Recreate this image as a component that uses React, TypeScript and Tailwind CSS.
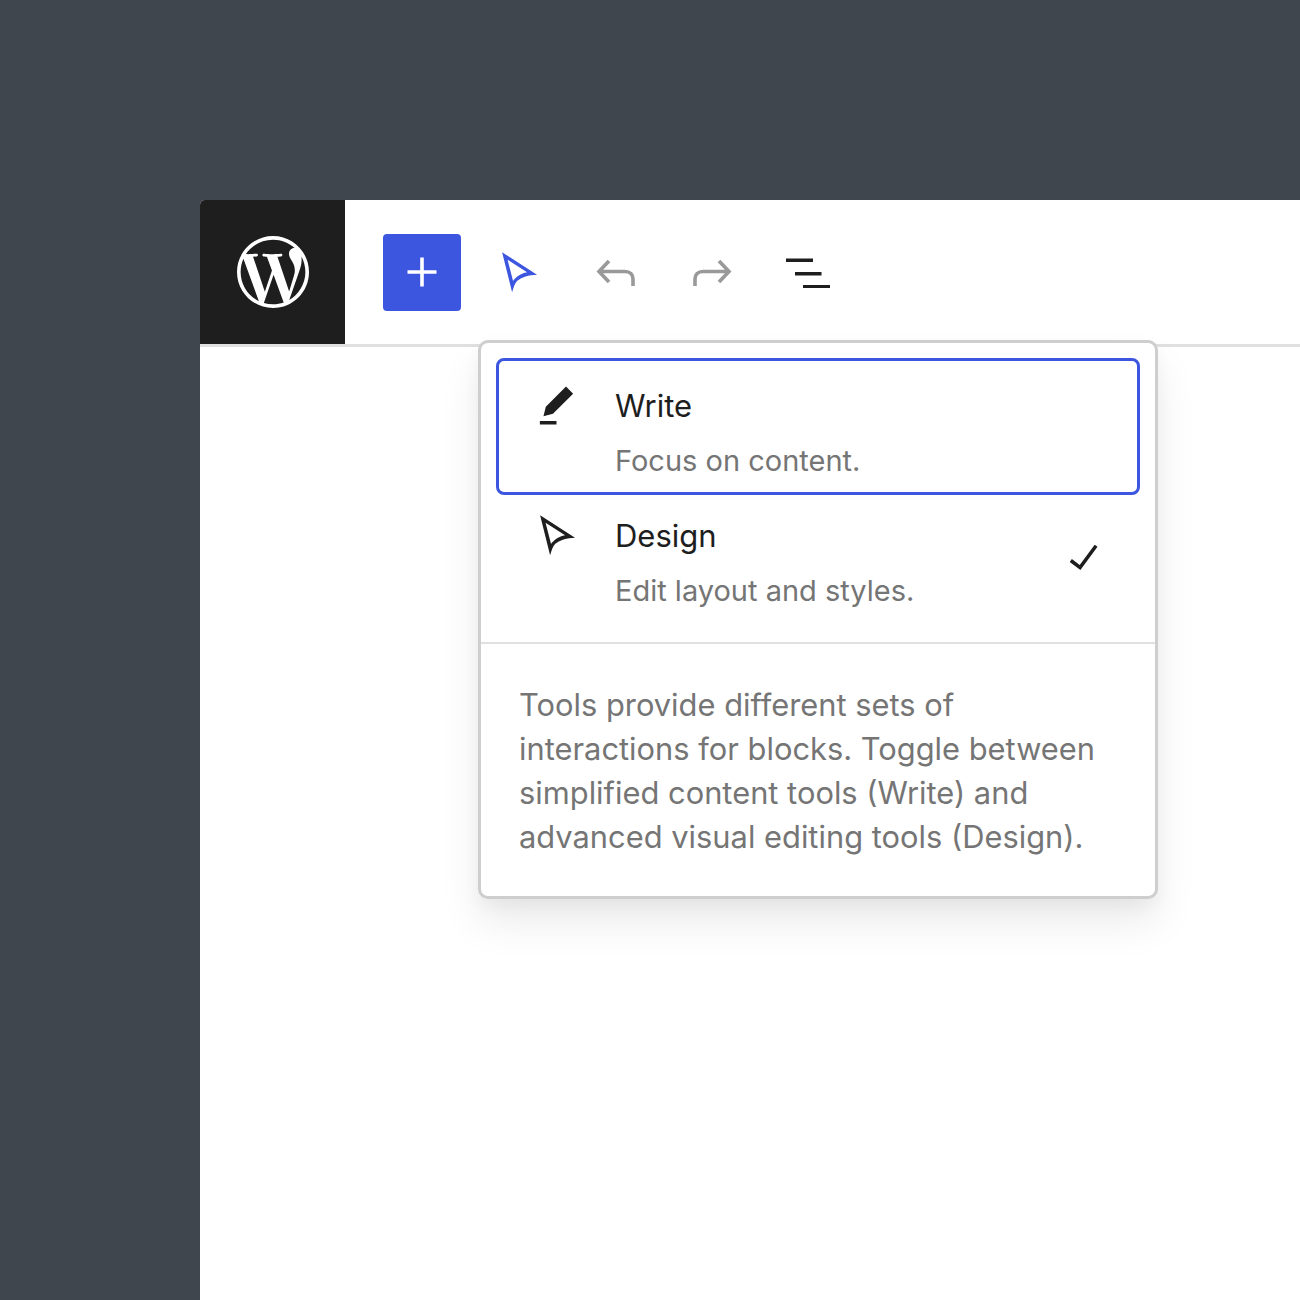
import React from "react";
import { SiWordpress } from "react-icons/si";

const cursorPath =
  "M5.1 3.5 19.8 12.9C16.5 13 13 14 11.5 15.5 10.5 16.5 10 18 9.3 20.3ZM7.4 6.6 9.7 15.6C10 15 10.5 14.6 10.9 14.2 12.2 13 13.8 12.2 15.6 11.9Z";

function Cursor({ className }: { className: string }) {
  return (
    <svg viewBox="0 0 24 24" className={className} fill="currentColor" fillRule="evenodd">
      <path d={cursorPath} />
    </svg>
  );
}

export default function App() {
  return (
    <div className="min-h-[1300px] bg-[#40464d] pl-[200px] pt-[200px] font-['Inter',sans-serif]">
      <div className="relative h-[1100px] rounded-tl-[5px] bg-white">
        <header className="flex h-[147px] items-start border-b-[3px] border-[#e0e0e0]">
          <div className="flex h-[144px] w-[145px] items-center justify-center rounded-tl-[5px] bg-[#1e1e1e]">
            <SiWordpress className="h-[72px] w-[72px] text-white" />
          </div>
          <div className="flex items-center pl-[38px] pt-[34px]">
            <button className="flex h-[77px] w-[78px] items-center justify-center rounded-[4px] bg-[#3d56e0]">
              <svg viewBox="0 0 30 30" className="-mt-[2px] h-[30px] w-[30px]" fill="none" stroke="#fff" strokeWidth="3.6">
                <path d="M0.5 15H29.5M15 0.5V29.5" />
              </svg>
            </button>
            <Cursor className="ml-[29px] h-[57px] w-[57px] text-[#3d56e0]" />
            <svg viewBox="0 0 40 30" className="-mt-[2px] ml-[49px] h-[30px] w-[40px]" fill="none" stroke="#999999" strokeWidth="3.6">
              <path d="M13 4 3 14.5 13 25M3 14.5H29C34 14.5 37 17.5 37 22V29" />
            </svg>
            <svg viewBox="0 0 40 30" className="-mt-[2px] ml-[56px] h-[30px] w-[40px]" fill="none" stroke="#999999" strokeWidth="3.6">
              <path d="M27 4 37 14.5 27 25M37 14.5H11C6 14.5 3 17.5 3 22V29" />
            </svg>
            <svg viewBox="0 0 44 30" className="ml-[54px] h-[30px] w-[44px]" fill="#1e1e1e">
              <path d="M0 0.5H27V4H0ZM9 14H35.5V17.5H9ZM17 27H44V30.5H17Z" />
            </svg>
          </div>
        </header>

        <div className="absolute left-[278px] top-[140px] w-[680px] rounded-[10px] border-[3px] border-[#cecece] bg-white leading-[44px] shadow-[0_24px_40px_rgba(0,0,0,0.08),0_8px_16px_rgba(0,0,0,0.04)]">
          <div className="border-b-2 border-[#e0e0e0] px-[15px] pb-[17px] pt-[15px]">
            <div className="flex h-[137px] items-start rounded-[8px] border-[3.5px] border-[#3d56e0] pl-[29px] pt-[23px]">
              <svg viewBox="0 0 24 24" className="-mt-[7px] h-[57px] w-[57px] shrink-0" fill="#1e1e1e">
                <path d="m19 7-3-3-8.5 8.5-1 4 4-1L19 7Zm-7 11.5H5V20h7v-1.5Z" />
              </svg>
              <div className="ml-[30px]">
                <div className="text-[31px] text-[#1e1e1e]">Write</div>
                <div className="mt-[11px] text-[29px] text-[#757575]">Focus on content.</div>
              </div>
            </div>
            <div className="flex h-[130px] items-start pl-[32px] pt-[19px]">
              <Cursor className="-mt-[7px] h-[57px] w-[57px] shrink-0 text-[#1e1e1e]" />
              <div className="ml-[30px] flex-1">
                <div className="text-[31px] text-[#1e1e1e]">Design</div>
                <div className="mt-[11px] text-[29px] text-[#757575]">Edit layout and styles.</div>
              </div>
              <svg viewBox="0 0 24 24" className="mr-[28px] mt-[14px] h-[57px] w-[57px] shrink-0" fill="#1e1e1e">
                <path d="M16.7 7.1l-6.3 8.5-3.3-2.5-.9 1.2 4.5 3.4L17.9 7.9z" />
              </svg>
            </div>
          </div>
          <p className="px-[38px] pb-[37px] pt-[39px] text-[30.85px] text-[#757575]">
            Tools provide different sets of interactions for blocks. Toggle between simplified content tools (Write) and advanced visual editing tools (Design).
          </p>
        </div>
      </div>
    </div>
  );
}
